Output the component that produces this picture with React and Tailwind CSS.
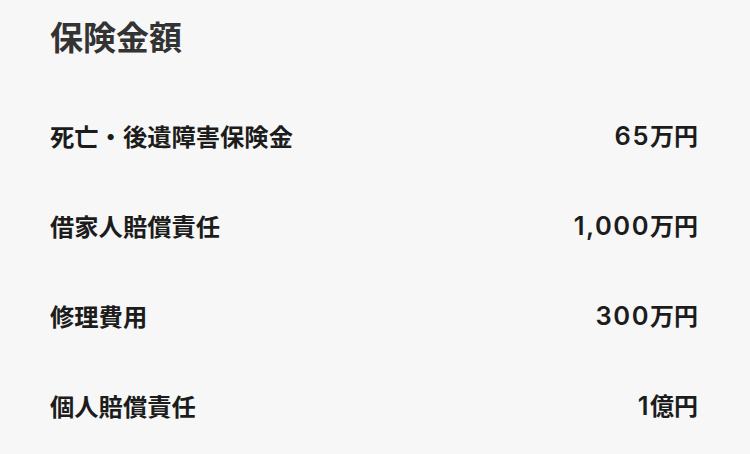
import React from 'react';

const rows = [
  { label: '死亡・後遺障害保険金', num: '65', unit: '万円' },
  { label: '借家人賠償責任', num: '1,000', unit: '万円' },
  { label: '修理費用', num: '300', unit: '万円' },
  { label: '個人賠償責任', num: '1', unit: '億円' },
];

const App = () => {
  return (
    <div
      className="w-[750px] h-[454px] bg-[#f7f7f7] overflow-hidden pl-[50px] pr-[52px]"
      style={{ fontFamily: '"Noto Sans CJK JP", "Noto Sans", sans-serif' }}
    >
      <h1 className="h-[72px] flex items-center text-[33px] font-bold text-[#333333] leading-none">
        保険金額
      </h1>
      <div className="flex flex-col pt-[19px]">
        {rows.map((row) => (
          <div key={row.label} className="h-[90px] flex items-center justify-between">
            <span className="text-[24.3px] font-bold text-[#1c1c1c] leading-none">{row.label}</span>
            <span className="flex items-baseline text-[24px] font-bold text-[#1c1c1c] leading-none">
              <span className="text-[25.5px] font-semibold tracking-[0.06em]" style={{ fontFamily: 'Inter, sans-serif' }}>
                {row.num}
              </span>
              <span>{row.unit}</span>
            </span>
          </div>
        ))}
      </div>
    </div>
  );
};

export default App;
